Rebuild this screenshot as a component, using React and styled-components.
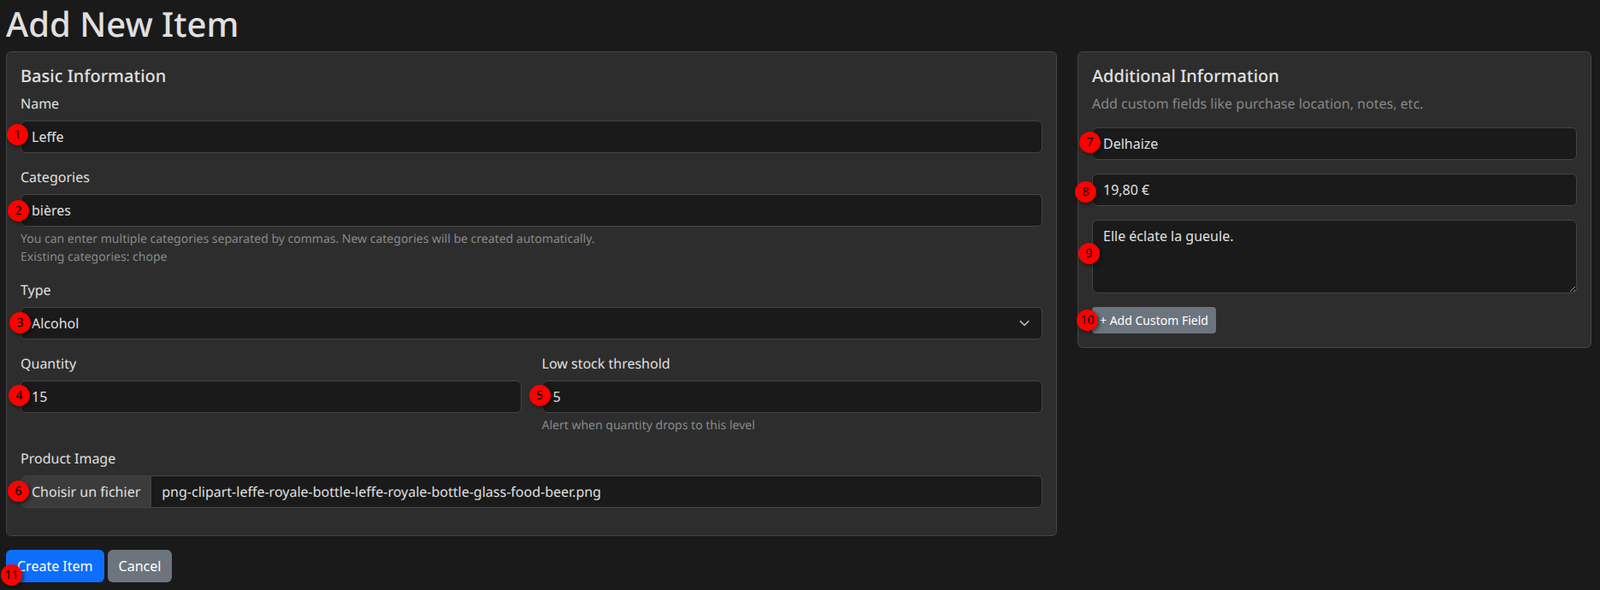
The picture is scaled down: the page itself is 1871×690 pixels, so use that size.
import React from "react";
import styled, { createGlobalStyle } from "styled-components";

const Global = createGlobalStyle`
  *, *::before, *::after { box-sizing: border-box; }
  html, body { margin: 0; padding: 0; background: #1a1a1a; }
  body {
    font-family: "Noto Sans", sans-serif;
    font-size: 16px;
    line-height: 1.5;
    color: #e0e0e0;
    height: 690px;
    overflow: hidden;
    text-rendering: geometricPrecision;
  }
`;

const Page = styled.main`
  padding: 4px 10px 0 7px;
`;
const Title = styled.h1`
  margin: 0 0 8px;
  font-size: 40px;
  font-weight: 500;
  line-height: 48px;
  color: #e0e0e0;
`;
const Columns = styled.div`
  display: grid;
  grid-template-columns: 1229px 601px;
  column-gap: 24px;
  align-items: start;
`;
const Card = styled.section`
  background: #2d2d2d;
  border: 1px solid #444;
  border-radius: 6px;
  padding: 16px;
`;
const CardTitle = styled.h5`
  margin: 0 0 8px;
  font-size: 20px;
  font-weight: 500;
  line-height: 24px;
`;
const Field = styled.div`
  position: relative;
  margin-bottom: 16px;
`;
const Label = styled.label`
  display: block;
  margin-bottom: 8px;
  line-height: 24px;
`;
const inputCss = `
  display: block;
  width: 100%;
  height: 38px;
  padding: 6px 12px;
  font: inherit;
  color: #e0e0e0;
  background: #1a1a1a;
  border: 1px solid #444;
  border-radius: 6px;
  outline: none;
`;
const Input = styled.input`${inputCss}`;
const TextArea = styled.textarea`
  ${inputCss}
  height: 86px;
`;
const SelectBox = styled.div`
  ${inputCss}
  display: flex;
  align-items: center;
  justify-content: space-between;
`;
const Chevron = styled.svg`
  width: 16px;
  height: 16px;
  fill: none;
  stroke: #adb5bd;
  stroke-width: 1.6;
  stroke-linecap: round;
  stroke-linejoin: round;
`;
const Help = styled.div`
  margin-top: 4px;
  font-size: 14px;
  line-height: 21px;
  color: #888;
`;
const TwoUp = styled.div`
  display: grid;
  grid-template-columns: 1fr 1fr;
  column-gap: 24px;
`;
const FileBox = styled.div`
  display: flex;
  align-items: center;
  height: 38px;
  background: #1a1a1a;
  border: 1px solid #444;
  border-radius: 6px;
  overflow: hidden;
`;
const FileButton = styled.span`
  display: flex;
  align-items: center;
  height: 100%;
  padding: 0 12px;
  background: #3b3b3b;
  border-right: 1px solid #444;
  white-space: nowrap;
`;
const FileName = styled.span`
  padding: 0 12px;
`;
const Muted = styled.p`
  margin: 0 0 16px;
  color: #888;
  font-size: 16px;
  line-height: 24px;
`;
const Actions = styled.div`
  position: relative;
  display: flex;
  gap: 4px;
  margin-top: 16px;
`;
const Button = styled.button`
  height: ${(p) => (p.$small ? 31 : 38)}px;
  padding: ${(p) => (p.$small ? "0 9px" : "0 13px")};
  font: inherit;
  font-size: ${(p) => (p.$small ? 14 : 16)}px;
  color: #fff;
  background: ${(p) => (p.$primary ? "#0d6efd" : "#6c757d")};
  border: 0;
  border-radius: ${(p) => (p.$small ? 4 : 6)}px;
`;
const AddWrap = styled.div`
  position: relative;
`;
const Marker = styled.span`
  position: absolute;
  left: ${(p) => p.$x}px;
  top: ${(p) => p.$y}px;
  width: 25px;
  height: 25px;
  display: flex;
  align-items: center;
  justify-content: center;
  border-radius: 50%;
  background: #f00;
  color: #000;
  font-size: 14px;
  line-height: 1;
  box-shadow: 2px 2px 4px rgba(0, 0, 0, 0.5);
`;

export default function App() {
  return (
    <Page>
      <Global />
      <Title>Add New Item</Title>
      <Columns>
        <Card>
          <CardTitle>Basic Information</CardTitle>
          <Field>
            <Label>Name</Label>
            <Input readOnly value="Leffe" />
            <Marker $x={-16} $y={36}>1</Marker>
          </Field>
          <Field>
            <Label>Categories</Label>
            <Input readOnly value="bières" />
            <Marker $x={-15} $y={39}>2</Marker>
            <Help>
              You can enter multiple categories separated by commas. New categories will be created automatically.
              <br />
              Existing categories: chope
            </Help>
          </Field>
          <Field>
            <Label>Type</Label>
            <SelectBox>
              Alcohol
              <Chevron viewBox="0 0 16 16"><path d="m3.2 5.7 4.8 4.6 4.8-4.6" /></Chevron>
            </SelectBox>
            <Marker $x={-13} $y={38}>3</Marker>
          </Field>
          <TwoUp>
            <Field>
              <Label>Quantity</Label>
              <Input readOnly value="15" />
              <Marker $x={-14} $y={37}>4</Marker>
            </Field>
            <Field>
              <Label>Low stock threshold</Label>
              <Input readOnly value="5" />
              <Marker $x={-15} $y={37}>5</Marker>
              <Help>Alert when quantity drops to this level</Help>
            </Field>
          </TwoUp>
          <Field>
            <Label>Product Image</Label>
            <FileBox>
              <FileButton>Choisir un fichier</FileButton>
              <FileName>png-clipart-leffe-royale-bottle-leffe-royale-bottle-glass-food-beer.png</FileName>
            </FileBox>
            <Marker $x={-15} $y={38}>6</Marker>
          </Field>
        </Card>
        <Card>
          <CardTitle>Additional Information</CardTitle>
          <Muted>Add custom fields like purchase location, notes, etc.</Muted>
          <Field>
            <Input readOnly value="Delhaize" />
            <Marker $x={-15} $y={5}>7</Marker>
          </Field>
          <Field>
            <Input readOnly value="19,80 €" />
            <Marker $x={-20} $y={9}>8</Marker>
          </Field>
          <Field>
            <TextArea readOnly value="Elle éclate la gueule." />
            <Marker $x={-16} $y={27}>9</Marker>
          </Field>
          <AddWrap>
            <Button $small>+ Add Custom Field</Button>
            <Marker $x={-18} $y={3}>10</Marker>
          </AddWrap>
        </Card>
      </Columns>
      <Actions>
        <Button $primary>Create Item</Button>
        <Button>Cancel</Button>
        <Marker $x={-6} $y={17}>11</Marker>
      </Actions>
    </Page>
  );
}
